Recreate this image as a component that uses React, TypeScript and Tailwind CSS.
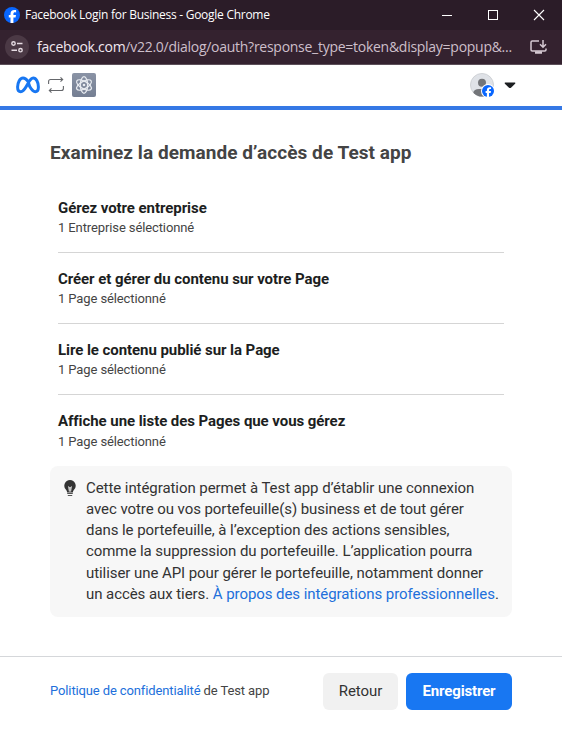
import type { ReactNode } from "react";

const permissions = [
  { title: "Gérez votre entreprise", detail: "1 Entreprise sélectionné" },
  { title: "Créer et gérer du contenu sur votre Page", detail: "1 Page sélectionné" },
  { title: "Lire le contenu publié sur la Page", detail: "1 Page sélectionné" },
  { title: "Affiche une liste des Pages que vous gérez", detail: "1 Page sélectionné" },
];

function FacebookLogo({ size }: { size: number }) {
  return (
    <svg width={size} height={size} viewBox="0 0 16 16" className="shrink-0">
      <circle cx="8" cy="8" r="8" fill="#0866ff" />
      <path
        d="M6.500 15.900v-5.300H4.800V8.100h1.700V7.100c0-2.900 1.300-4.200 4.100-4.200.5 0 1.200.1 1.500.2v2.300l-1-.1c-1.200 0-1.700.5-1.700 1.700v1.100h2.600l-.45 2.500H9.400v5.300z"
        fill="#fff"
      />
    </svg>
  );
}

function TitleBar() {
  return (
    <div className="flex h-[30px] items-center bg-[#2b1c28] pl-1 pr-4">
      <FacebookLogo size={16} />
      <span className="ml-[5px] whitespace-nowrap font-['Open_Sans','Noto_Sans',sans-serif] text-[12px] leading-[30px] tracking-[-0.27px] text-white">
        Facebook Login for Business - Google Chrome
      </span>
      <svg width="104" height="12" viewBox="0 0 104 12" fill="none" stroke="#fff" className="ml-auto">
        <path d="M0 6.500h10M46.500 1.500h9v9h-9z" shapeRendering="crispEdges" />
        <path d="M92 1l10 10M102 1L92 11" strokeWidth="1.100" />
      </svg>
    </div>
  );
}

function AddressBar() {
  return (
    <div className="flex h-[35px] items-center border-b border-[#5c4f59] bg-[#34222f] pl-[5px] pr-[15px]">
      <div className="flex size-6 shrink-0 items-center justify-center rounded-full bg-[#4b3945]">
        <svg width="14" height="14" viewBox="0 0 14 14" fill="none" stroke="#e6dce3" strokeWidth="1.400">
          <circle cx="3.500" cy="3.500" r="1.700" />
          <path d="M7 3.500h5.500M1.500 10.200H7" />
          <circle cx="10.500" cy="10.200" r="1.700" />
        </svg>
      </div>
      <span className="ml-2 whitespace-nowrap font-['Open_Sans','Noto_Sans',sans-serif] text-[14px] leading-[34px] tracking-[-0.27px] text-[#cdbfca]">
        <span className="text-[#f1e8ef]">facebook.com</span>
        /v22.0/dialog/oauth?response_type=token&amp;display=popup&amp;...
      </span>
      <svg width="17" height="16" viewBox="0 0 17 16" fill="none" stroke="#d5c9d2" strokeWidth="1.500" className="ml-auto shrink-0">
        <path d="M9 2H2.200Q1 2 1 3.200v7.600Q1 12 2.200 12h12.600q1.200 0 1.200-1.200V9.500" />
        <path d="M13 1v7M10 5.200l3 3 3-3" />
        <path d="M5 13.500h7" strokeWidth="2.500" />
      </svg>
    </div>
  );
}

function AppHeader() {
  return (
    <header className="flex h-[45px] items-center border-b-4 border-[#3578e5] pl-4 pr-[46px]">
      <svg width="24" height="18" viewBox="0 0 24 18" fill="none" className="-mt-px shrink-0">
        <path
          d="M12 5.500C10 2.600 8.600 2.100 7 2.100 3.800 2.100 1.600 6.600 1.600 11c0 3.200 1.200 4.700 3.200 4.700 2.200 0 3.500-1.800 5.300-4.900L12 7.500C14 3.800 15.300 2.100 17.200 2.100c3 0 5.200 4.300 5.200 8.900 0 3.100-1.200 4.700-3.200 4.700-2.200 0-3.400-1.700-5.500-5.200z"
          stroke="#1877f2"
          strokeWidth="3"
          strokeLinejoin="round"
        />
      </svg>
      <svg width="16" height="16" viewBox="0 0 16 16" fill="none" stroke="#65676b" strokeWidth="1.100" className="-mt-[2px] ml-2 shrink-0">
        <path d="M.6 7V4.500q0-2 2-2h12M12.500.4l2.200 2.100-2.200 2.100" />
        <path d="M15.400 9v2.500q0 2-2 2h-12M3.500 11.400l-2.200 2.100 2.200 2.100" />
      </svg>
      <div className="-mt-[2px] ml-2 flex size-6 shrink-0 items-center justify-center rounded-[2px] bg-linear-to-b from-[#8a93a5] to-[#747e92]">
        <svg width="18" height="18" viewBox="0 0 18 18" fill="none" stroke="#e8ebf0" strokeWidth="1.200">
          <ellipse cx="9" cy="9" rx="3.700" ry="8.300" />
          <ellipse cx="9" cy="9" rx="3.700" ry="8.300" transform="rotate(60 9 9)" />
          <ellipse cx="9" cy="9" rx="3.700" ry="8.300" transform="rotate(120 9 9)" />
          <circle cx="9" cy="9" r="3.600" strokeWidth=".8" />
          <circle cx="9" cy="9" r="1.300" fill="#e8ebf0" stroke="none" />
        </svg>
      </div>
      <div className="relative -mt-px ml-auto size-6">
        <svg width="24" height="24" viewBox="0 0 24 24">
          <defs>
            <clipPath id="avatar">
              <circle cx="12" cy="12" r="11.500" />
            </clipPath>
          </defs>
          <circle cx="12" cy="12" r="11.500" fill="#dfe2e7" stroke="#cfd2d6" />
          <g clipPath="url(#avatar)" fill="#737579">
            <circle cx="12" cy="9.800" r="4" />
            <path d="M3 24v-4q1-4 6-4h6q5 0 6 4v4z" />
          </g>
        </svg>
        <div className="absolute -right-[1px] -bottom-[1px] rounded-full bg-white p-px">
          <FacebookLogo size={12} />
        </div>
      </div>
      <svg width="12" height="7" viewBox="0 0 12 7" className="ml-[10px] shrink-0">
        <path d="M1.200.5h9.600q1 .2.300 1.200L7 5.700q-1 .8-2 0L.9 1.700Q.2.700 1.200.5z" fill="#1c1e21" />
      </svg>
    </header>
  );
}

function Permission({ title, detail }: { title: string; detail: string }) {
  return (
    <li className="border-b border-[#d5d5d5] pt-4 pb-[14px] last:border-b-0 last:[&_p]:pt-px">
      <h2 className="text-[15px] leading-5 font-bold tracking-[-0.065px] text-[#1c1e21]">{title}</h2>
      <p className="text-[13px] leading-5 tracking-[-0.11px] text-[#444]">{detail}</p>
    </li>
  );
}

function Link({ children }: { children: ReactNode }) {
  return <a className="text-[#216fdb]">{children}</a>;
}

export default function App() {
  return (
    <div className="flex h-[735px] w-[562px] flex-col overflow-hidden bg-white font-[Roboto,sans-serif]">
      <TitleBar />
      <AddressBar />
      <AppHeader />
      <main className="flex-1 px-[50px] pt-[31px]">
        <h1 className="text-[19px] leading-6 font-bold tracking-[0.06px] whitespace-nowrap text-[#444]">
          Examinez la demande d’accès de Test app
        </h1>
        <ul className="mt-[17px] px-2">
          {permissions.map((item) => (
            <Permission key={item.title} {...item} />
          ))}
        </ul>
        <section className="flex h-[151px] rounded-lg bg-[#f7f7f7] pt-[11.800px] pl-[14px]">
          <svg width="12" height="17" viewBox="0 0 12 17" className="mt-[2px] shrink-0">
            <path d="M6 0a5.700 5.700 0 0 0-4 9.700q1.100 1.100 1.100 2.800h5.800q0-1.700 1.100-2.800A5.700 5.700 0 0 0 6 0z" fill="#333" />
            <path d="M4.200 6l.7 5.500h2.200L7.800 6 6 7.500z" fill="#f7f7f7" />
            <path d="M6 7.500v4" stroke="#777" strokeWidth=".8" />
            <path d="M3.200 13.500h5.600M3.800 15.500h4.400" stroke="#555" strokeWidth="1" />
          </svg>
          <p className="ml-[10px] text-[15px] leading-[21.200px] tracking-[-0.067px] whitespace-nowrap text-[#333]">
            Cette intégration permet à Test app d’établir une connexion<br />
            avec votre ou vos portefeuille(s) business et de tout gérer<br />
            dans le portefeuille, à l’exception des actions sensibles,<br />
            comme la suppression du portefeuille. L’application pourra<br />
            utiliser une API pour gérer le portefeuille, notamment donner<br />
            un accès aux tiers. <Link>À propos des intégrations professionnelles</Link>.
          </p>
        </section>
      </main>
      <footer className="flex h-[79px] items-start border-t border-[#d5d7da] px-[50px] pt-4">
        <p className="text-[13px] leading-[36px] tracking-[-0.12px] whitespace-nowrap text-[#444]">
          <Link>Politique de confidentialité</Link> de Test app
        </p>
        <button className="ml-auto h-[37px] w-[75px] rounded-md bg-[#f1f1f1] text-[15px] tracking-[-0.05px] text-[#333]">
          Retour
        </button>
        <button className="ml-2 h-[37px] w-[106px] rounded-md bg-[#1877f2] text-[15px] font-bold tracking-[-0.15px] text-white">
          Enregistrer
        </button>
      </footer>
    </div>
  );
}
